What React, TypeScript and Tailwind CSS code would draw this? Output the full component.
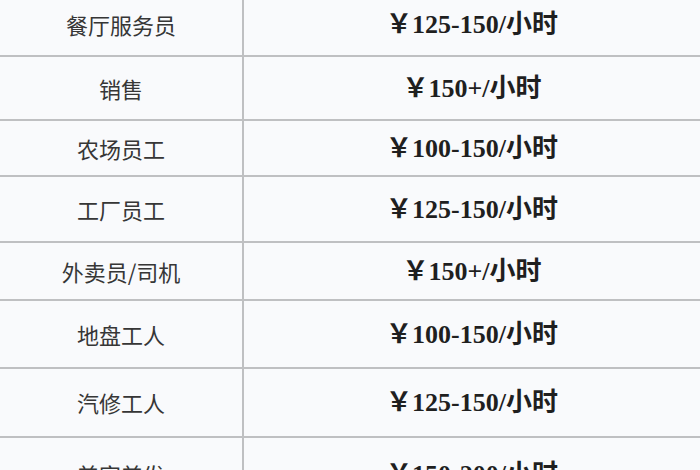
const rows = [
  { job: "餐厅服务员", pay: "￥125-150/小时", h: "h-[57px]", pt: "pb-[6px]" },
  { job: "销售", pay: "￥150+/小时", h: "h-[64px]", pt: "" },
  { job: "农场员工", pay: "￥100-150/小时", h: "h-[56px]", pt: "" },
  { job: "工厂员工", pay: "￥125-150/小时", h: "h-[66px]", pt: "" },
  { job: "外卖员/司机", pay: "￥150+/小时", h: "h-[58px]", pt: "" },
  { job: "地盘工人", pay: "￥100-150/小时", h: "h-[68px]", pt: "" },
  { job: "汽修工人", pay: "￥125-150/小时", h: "h-[69px]", pt: "" },
  { job: "美容美发", pay: "￥150-200/小时", h: "h-[72px]", pt: "" },
];

export default function App() {
  return (
    <div className="w-[700px] h-[470px] overflow-hidden bg-[#f9fafc]">
      {rows.map((r, i) => (
        <div
          key={i}
          className={`flex ${r.h} ${i < rows.length - 1 ? "border-b-2 border-[#bfc0c2]" : ""}`}
        >
          <div
            className={`w-[244px] border-r-2 border-[#bfc0c2] flex items-center justify-center ${r.pt} text-[22px] text-[#363636] font-['Noto_Sans_CJK_SC',sans-serif]`}
          >
            {r.job}
          </div>
          <div
            className={`flex-1 flex items-center justify-center ${r.pt} text-[26px] font-bold text-[#1f1f1f] font-['Liberation_Serif','Noto_Sans_CJK_SC',serif]`}
          >
            {r.pay}
          </div>
        </div>
      ))}
    </div>
  );
}
